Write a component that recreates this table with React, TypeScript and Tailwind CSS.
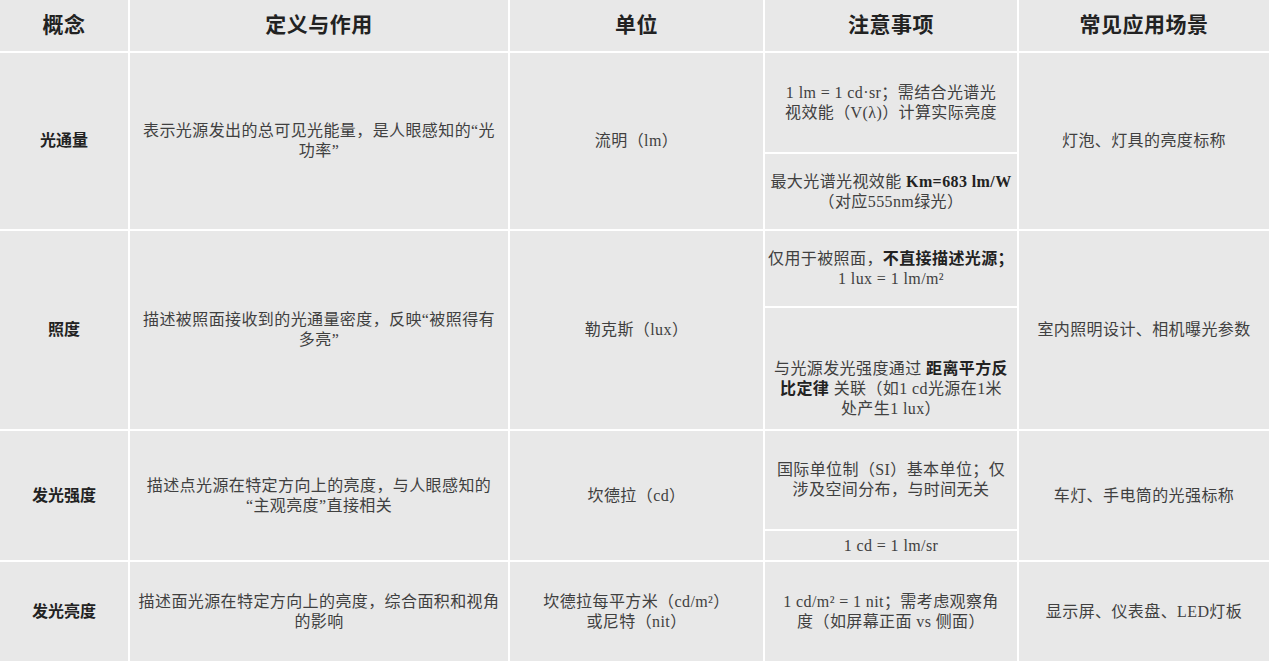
import React from "react";

const font = {
  fontFamily: '"Liberation Serif", "Noto Sans CJK SC", serif',
};

function Cell({
  children,
  className = "",
}: {
  children: React.ReactNode;
  className?: string;
}) {
  return (
    <div
      className={`bg-[#e8e8e8] flex items-center justify-center text-center px-1 ${className}`}
    >
      {children}
    </div>
  );
}

function Head({ children }: { children: React.ReactNode }) {
  return (
    <Cell className="text-[21px] font-bold text-[#222] tracking-[0.5px]">
      {children}
    </Cell>
  );
}

function Label({ children }: { children: React.ReactNode }) {
  return (
    <Cell className="text-[16px] font-bold text-[#222]">{children}</Cell>
  );
}

function Body({
  children,
  className = "",
}: {
  children: React.ReactNode;
  className?: string;
}) {
  return (
    <Cell
      className={`text-[16px] leading-[20px] text-[#404040] tracking-[0.4px] whitespace-nowrap ${className}`}
    >
      <div>{children}</div>
    </Cell>
  );
}

export default function App() {
  return (
    <div
      style={font}
      className="w-[1269px] h-[661px] bg-white grid grid-cols-[128px_378px_253px_252px_1fr] grid-rows-[51px_176px_198px_129px_1fr] gap-[2px] overflow-hidden"
    >
      {/* header */}
      <Head>概念</Head>
      <Head>定义与作用</Head>
      <Head>单位</Head>
      <Head>注意事项</Head>
      <Head>常见应用场景</Head>

      {/* 光通量 */}
      <Label>光通量</Label>
      <Body>
        表示光源发出的总可见光能量，是人眼感知的“光
        <br />
        功率”
      </Body>
      <Body>流明（lm）</Body>
      <div className="flex flex-col gap-[2px]">
        <Body className="h-[99px]">
          1 lm = 1 cd·sr；需结合光谱光
          <br />
          视效能（V(λ)）计算实际亮度
        </Body>
        <Body className="flex-1">
          最大光谱光视效能 <b className="text-[#222]">Km=683 lm/W</b>
          <br />
          （对应555nm绿光）
        </Body>
      </div>
      <Body>灯泡、灯具的亮度标称</Body>

      {/* 照度 */}
      <Label>照度</Label>
      <Body>
        描述被照面接收到的光通量密度，反映“被照得有
        <br />
        多亮”
      </Body>
      <Body>勒克斯（lux）</Body>
      <div className="flex flex-col gap-[2px]">
        <Body className="h-[75px]">
          仅用于被照面，<b className="text-[#222]">不直接描述光源；</b>
          <br />1 lux = 1 lm/m²
        </Body>
        <Body className="flex-1 pt-[40px]">
          与光源发光强度通过 <b className="text-[#222]">距离平方反</b>
          <br />
          <b className="text-[#222]">比定律</b> 关联（如1 cd光源在1米
          <br />
          处产生1 lux）
        </Body>
      </div>
      <Body>室内照明设计、相机曝光参数</Body>

      {/* 发光强度 */}
      <Label>发光强度</Label>
      <Body>
        描述点光源在特定方向上的亮度，与人眼感知的
        <br />
        “主观亮度”直接相关
      </Body>
      <Body>坎德拉（cd）</Body>
      <div className="flex flex-col gap-[2px]">
        <Body className="h-[98px]">
          国际单位制（SI）基本单位；仅
          <br />
          涉及空间分布，与时间无关
        </Body>
        <Body className="flex-1">1 cd = 1 lm/sr</Body>
      </div>
      <Body>车灯、手电筒的光强标称</Body>

      {/* 发光亮度 */}
      <Label>发光亮度</Label>
      <Body>
        描述面光源在特定方向上的亮度，综合面积和视角
        <br />
        的影响
      </Body>
      <Body>
        坎德拉每平方米（cd/m²）
        <br />
        或尼特（nit）
      </Body>
      <Body>
        1 cd/m² = 1 nit；需考虑观察角
        <br />
        度（如屏幕正面 vs 侧面）
      </Body>
      <Body>显示屏、仪表盘、LED灯板</Body>
    </div>
  );
}
